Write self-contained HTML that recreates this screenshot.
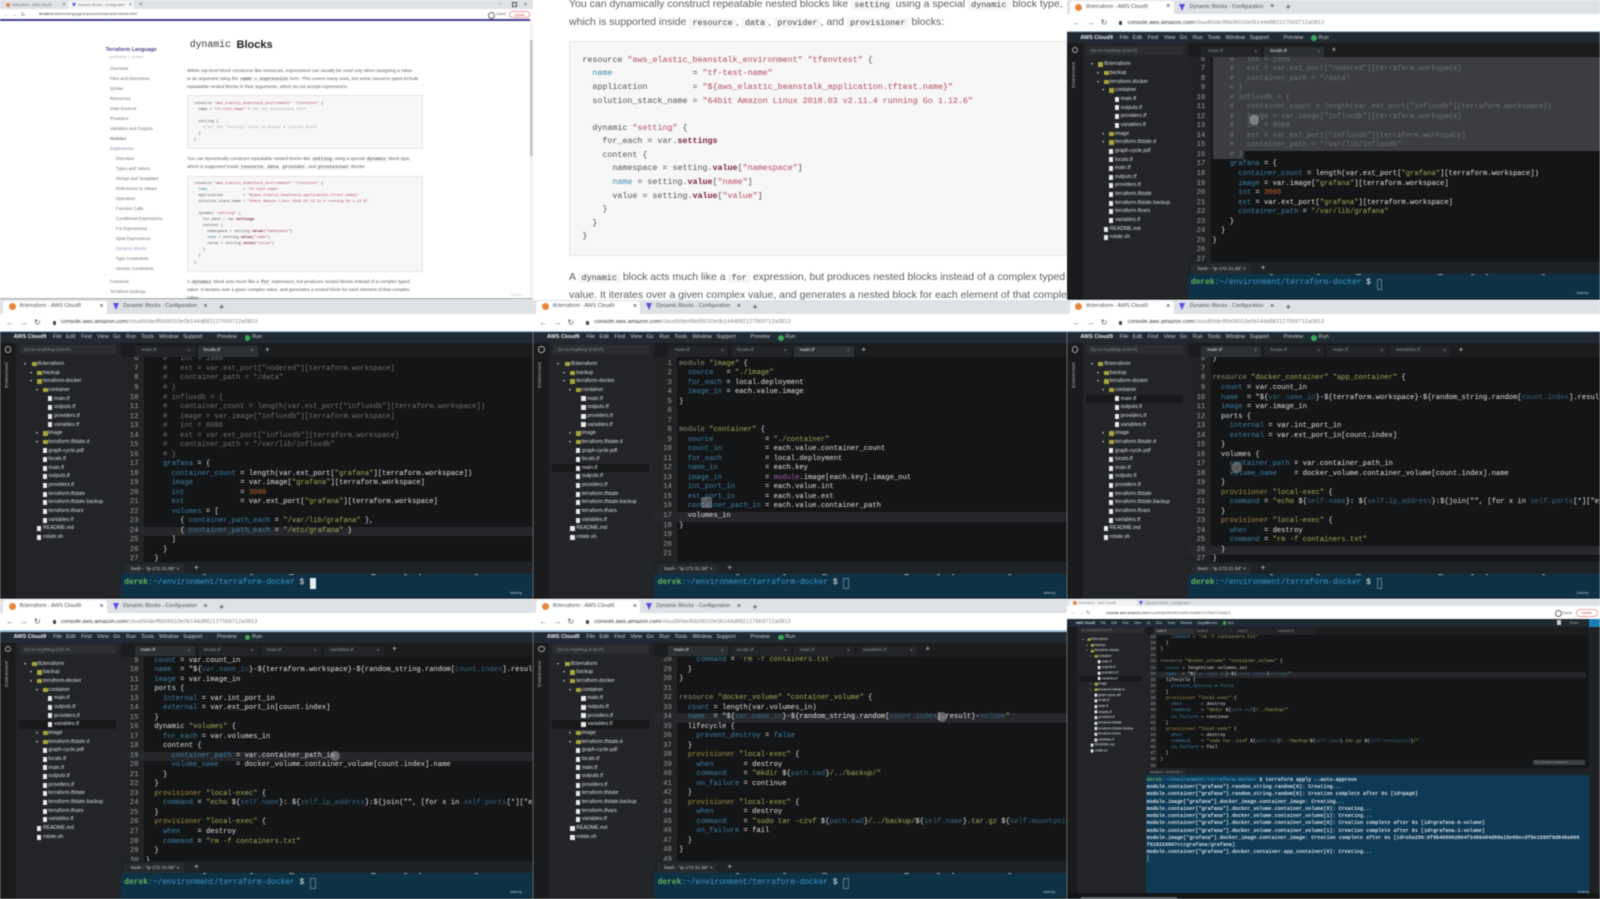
<!DOCTYPE html>
<html lang="en"><head><meta charset="utf-8"><title>Dynamic Blocks</title>
<style>
html,body{margin:0;padding:0;background:#fff;width:1600px;height:899px;overflow:hidden}
body{position:relative;font-family:"Liberation Sans",sans-serif}
.tile{position:absolute;width:533.4px;height:299.7px;overflow:hidden;background:#1e2022;filter:blur(.42px)}
.a{position:absolute;white-space:nowrap}
.tb{position:absolute;left:0;top:0;width:100%;height:14px;background:#dee1e6}
.at{position:absolute;left:3px;top:1px;width:104px;height:13px;background:#fff;border-radius:3px 3px 0 0}
.ab{position:absolute;left:0;top:14px;width:100%;height:17px;background:#fff}
.bl{position:absolute;left:0;top:31px;width:100%;height:1.3px;background:#a4c8e4}
.fav{position:absolute;left:8.5px;top:3.5px;width:7px;height:7px;border-radius:50%;background:#e8873a}
.fv2{position:absolute;left:112.5px;top:3.5px;width:0;height:0;border-left:3.5px solid transparent;border-right:3.5px solid transparent;border-top:7px solid #5c4ee5}
.tt{position:absolute;top:3.8px;font-size:5.3px;line-height:7px;color:#555;white-space:nowrap}
.tx{position:absolute;top:3.3px;font-size:7px;line-height:8px;color:#333}
.nv{position:absolute;top:18px;font-size:8px;line-height:9px;color:#777}
.url{position:absolute;left:61px;top:19.6px;font-size:5.75px;line-height:7px;color:#888;white-space:nowrap}
.url b{font-weight:normal;color:#333}
.lk{position:absolute;left:52.6px;top:21px;width:3px;height:4px;background:#444;border-radius:1px}
.mn{position:absolute;left:0;top:32.3px;width:100%;height:11px;background:#202a33}
.mi{position:absolute;top:34.8px;font-size:5.5px;line-height:7px;color:#c8ccd0;white-space:nowrap}
.gr{position:absolute;left:244.5px;top:35.2px;width:5.8px;height:5.8px;border-radius:50%;background:#3aa657}
.sb{position:absolute;left:0;top:43.3px;width:16px;height:256.5px;background:#191b1d}
.tr{position:absolute;left:16px;top:43.3px;width:105px;height:256.5px;background:#222427}
.se{position:absolute;left:20px;top:45.5px;width:96px;height:9px;background:#2c2e31;color:#8a8f93;font-size:4.6px;line-height:9px;padding-left:4px;box-sizing:border-box}
.mg{position:absolute;left:5px;top:46.5px;width:4.4px;height:4.4px;border:1px solid #aaa;border-radius:50%}
.ev{position:absolute;left:3px;top:60px;width:8px;height:30px;writing-mode:vertical-rl;transform:rotate(180deg);font-size:4.6px;line-height:8px;color:#b0b0b0;text-align:center}
.tr0{position:absolute;left:121px;top:43.3px;width:413px;height:14px;background:#1a1c1e}
.tbn{position:absolute;top:46.5px;width:60px;height:10.5px;background:#222427;color:#8b9095;font-size:4.9px;line-height:10.5px;padding-left:4px;box-sizing:border-box;white-space:nowrap}
.tbn.on{background:#2d3033;color:#dfe1e3}
.tbn::after{content:"×";position:absolute;right:4px;top:0;color:#888;font-size:5px}
.pl{position:absolute;top:45px;font-size:8px;line-height:10px;color:#ccc}
.ed{position:absolute;left:121px;top:57.3px;width:413px;height:204.7px;background:#141516;overflow:hidden}
.gt{position:absolute;left:0;top:0;width:23px;height:100%;background:#212325}
.hl{position:absolute;left:0;width:100%;height:9.52px;background:#25272a;margin-top:1.2px}
pre{position:absolute;margin:0;font-family:"Liberation Mono",monospace;font-size:7.17px;line-height:9.52px;white-space:pre;color:#e0e0e0}
.ed pre{margin-top:1.2px}
.ed .a{margin-top:1.2px}
.ln{left:0;width:17.5px;text-align:right;color:#9a9c9e}
.cd{left:24.8px}
.k{color:#3a7fa3}.s{color:#a0ad55}.y{color:#a08f3f}.c{color:#6d7072}.n{color:#c9672d}.m{color:#a45fa8}.d{color:#37657f}.o{color:#8f8f70}
.tt2{position:absolute;left:121px;top:262px;width:413px;height:12px;background:#1e2225}
.tl{position:absolute;left:124px;top:264px;width:60px;height:10px;background:#262a2e;color:#c0c4c7;font-size:4.7px;line-height:10px;padding-left:7px;box-sizing:border-box;white-space:nowrap}
.te{position:absolute;left:121px;top:274px;width:413px;height:24.5px;background:#0d3246}
.te::before{content:"";position:absolute;left:0;top:0;width:100%;height:1px;background:
linear-gradient(#999,#999) 82px 0/3px 1px no-repeat,linear-gradient(#999,#999) 129px 0/3px 1px no-repeat,linear-gradient(#999,#999) 168px 0/5px 1px no-repeat,linear-gradient(#999,#999) 250px 0/5px 1px no-repeat,linear-gradient(#999,#999) 283px 0/3px 1px no-repeat,linear-gradient(#999,#999) 298px 0/2px 1px no-repeat,linear-gradient(#999,#999) 354px 0/3px 1px no-repeat}
.pr{position:absolute;left:3.3px;top:4.3px;font-family:"Liberation Mono",monospace;font-size:7.9px;line-height:10px;color:#3c94c6;white-space:pre}
.pr b{color:#63b45c;font-weight:bold}.pr i{font-style:normal;color:#e8e8e8}
.cu{position:absolute;left:189px;top:4.5px;width:3.5px;height:9px;border:.6px solid #5d7c8c}
.cu.on{background:#e6eef2;border-color:#e6eef2}
.ud{position:absolute;left:510px;top:290px;font-size:4px;line-height:6px;color:#b4c0c6}
.tree{position:absolute;left:0;top:60.3px;width:121px}
.tree p{margin:0;height:8.67px;line-height:8.67px;font-size:5.2px;white-space:nowrap;position:relative;color:#dcdfe1}
.tree p.sl{background:linear-gradient(#16181a,#16181a) 19px 0/97px 100% no-repeat}
.tree p::before{content:"";position:absolute;top:1.8px;left:0;width:4.2px;height:5px}
.r0{padding-left:37.5px}.r1{padding-left:43px}.r2{padding-left:48.4px}.r3{padding-left:54px}
.r0::before{left:31.5px!important}.r1::before{left:37px!important}.r2::before{left:42.6px!important}.r3::before{left:48px!important}
.fi::before{background:#e8eaec}
.di::before{background:#a8a63a;width:5px!important;height:4.2px!important;top:2.2px!important}
.di::after{content:"";position:absolute;top:3px;width:0;height:0;border-left:1.4px solid transparent;border-right:1.4px solid transparent;border-top:2.4px solid #ccc}
.r0.di::after{left:24px}.r1.di::after{left:30px}.r2.di::after{left:35.5px}
.w{background:#fff}
.dl{position:absolute;white-space:nowrap;line-height:6px}
.s1{font-size:4.35px;color:#70757a;left:110px}
.s2{font-size:4.35px;color:#70757a;left:115.8px}
.p1{left:187px;font-size:4.65px;line-height:8px;color:#5d6064}
.p1 code{font-family:"Liberation Mono",monospace;color:#444;background:#f3f3f3;padding:0 .8px}
.bx{position:absolute;background:#f7f7f7;border:.5px solid #e4e4e4;box-sizing:border-box}
.c1{font-size:3.72px;line-height:6.07px;color:#555}
.r{color:#b54a60}.b{color:#3f8cb0}.h{color:#7a1f3a;font-weight:bold}.g{color:#aaa}
.p2{left:35.7px;font-size:10.5px;line-height:14px;color:#5c6063;position:absolute;white-space:nowrap}
.p2 code{font-family:"Liberation Mono",monospace;font-size:8.4px;background:#f5f5f5;color:#444;padding:0 3.2px}
.c2{font-size:8.35px;line-height:13.57px;left:49px;top:53.9px;color:#555}
.t9 pre{font-size:4.54px;line-height:6.12px}
.t9 .tm{font-size:5.08px;line-height:7.23px;color:#d6dde0;font-weight:bold}
</style></head><body>

<!-- TILE 1 -->
<div class="tile w" style="left:0;top:0;filter:blur(.5px)">
<div class="a" style="left:0;top:0;width:100%;height:9px;background:#dee1e6"></div>
<div class="a" style="left:68px;top:.5px;width:66px;height:8.5px;background:#f5f6f7;border-radius:2px 2px 0 0"></div>
<div class="a" style="left:5.5px;top:3px;width:4px;height:4px;background:#e8873a;border-radius:50%"></div>
<div class="a" style="left:12px;top:2.5px;font-size:3.4px;line-height:5px;color:#777">tfcterraform - AWS Cloud9</div>
<div class="a" style="left:62.5px;top:2px;font-size:5px;line-height:6px;color:#444">×</div>
<div class="a" style="left:71.5px;top:2.5px;width:0;height:0;border-left:2px solid transparent;border-right:2px solid transparent;border-top:4px solid #5c4ee5"></div>
<div class="a" style="left:78px;top:2.5px;font-size:3.4px;line-height:5px;color:#777">Dynamic Blocks - Configuration</div>
<div class="a" style="left:129px;top:2px;font-size:5px;line-height:6px;color:#444">×</div>
<div class="a" style="left:139px;top:1.5px;font-size:6px;line-height:7px;color:#555">+</div>
<div class="a" style="left:499px;top:1px;font-size:5px;line-height:6px;color:#555">–</div>
<div class="a" style="left:512px;top:2px;width:3px;height:3px;border:.7px solid #555"></div>
<div class="a" style="left:524px;top:1.5px;font-size:5px;line-height:6px;color:#444">×</div>
<div class="a" style="left:0;top:9px;width:100%;height:10px;background:#fff"></div>
<div class="a" style="left:4px;top:11.5px;font-size:5px;line-height:6px;color:#555">←&nbsp;&nbsp;→&nbsp;&nbsp;&nbsp;↻</div>
<div class="a" style="left:39px;top:12px;font-size:3.65px;line-height:5px;color:#555"><span style="color:#222">terraform.io</span>/docs/language/expressions/dynamic-blocks.html</div>
<div class="a" style="left:488px;top:11.5px;width:5px;height:5px;border:.6px solid #666;border-radius:50%"></div>
<div class="a" style="left:496.5px;top:12px;font-size:3.4px;line-height:5px;color:#555">Guest</div>
<div class="a" style="left:509px;top:10.5px;width:21px;height:7px;border:.6px solid #e6a3a0;border-radius:4px;box-sizing:border-box;font-size:3.2px;line-height:6px;text-align:center;color:#c9574f">Update</div>
<div class="a" style="left:0;top:19.3px;width:530px;height:1.6px;background:#43408f"></div>
<div class="a" style="left:530px;top:19px;width:4px;height:281px;background:#f1f1f1"></div>
<div class="a" style="left:530px;top:40px;width:4px;height:116px;background:#c4c4c4"></div>
<div class="a" style="left:0;top:298px;width:100%;height:2px;background:#bdbdbd"></div>

<div class="a" style="left:189.7px;top:37.5px;font-family:'Liberation Mono',monospace;font-size:9.8px;line-height:14px;color:#33363a">dynamic</div>
<div class="a" style="left:236.5px;top:37.5px;font-size:11px;line-height:14px;font-weight:bold;color:#222">Blocks</div>

<div class="dl" style="left:105.6px;top:46.5px;font-size:5.3px;font-weight:bold;color:#4a4a8c">Terraform Language</div>
<div class="dl" style="left:110px;top:53.5px;font-size:3.8px;color:#aaa">(versions)&nbsp;&nbsp;|&nbsp;&nbsp;(more)</div>
<div class="dl s1" style="top:66px">Overview</div>
<div class="dl s1" style="top:76px">Files and Directories</div>
<div class="dl s1" style="top:86px">Syntax</div>
<div class="dl s1" style="top:96px">Resources</div>
<div class="dl s1" style="top:106px">Data Sources</div>
<div class="dl s1" style="top:116px">Providers</div>
<div class="dl s1" style="top:126px">Variables and Outputs</div>
<div class="dl s1" style="top:136px;color:#555">Modules</div>
<div class="dl s1" style="top:146px;color:#8b8bb0">Expressions</div>
<div class="dl s2" style="top:155.7px">Overview</div>
<div class="dl s2" style="top:165.7px">Types and Values</div>
<div class="dl s2" style="top:175.7px">Strings and Templates</div>
<div class="dl s2" style="top:185.7px">References to Values</div>
<div class="dl s2" style="top:195.7px">Operators</div>
<div class="dl s2" style="top:205.7px">Function Calls</div>
<div class="dl s2" style="top:215.7px">Conditional Expressions</div>
<div class="dl s2" style="top:225.7px">For Expressions</div>
<div class="dl s2" style="top:235.7px">Splat Expressions</div>
<div class="dl s2" style="top:245.7px;color:#9a9ab8">Dynamic Blocks</div>
<div class="dl s2" style="top:255.7px">Type Constraints</div>
<div class="dl s2" style="top:265.7px">Version Constraints</div>
<div class="dl s1" style="top:278.7px">Functions</div>
<div class="dl s1" style="top:288.7px">Terraform Settings</div>

<div class="dl p1" style="top:67px">Within top-level block constructs like resources, expressions can usually be used only when assigning a value</div>
<div class="dl p1" style="top:75px">to an argument using the <code>name = expression</code> form. This covers many uses, but some resource types include</div>
<div class="dl p1" style="top:83px">repeatable nested blocks in their arguments, which do not accept expressions:</div>
<div class="bx" style="left:187px;top:95px;width:236px;height:54px"></div>
<pre class="c1" style="left:194px;top:100.7px">resource <span class="r">"aws_elastic_beanstalk_environment" "tfenvtest"</span> {
  name = <span class="r">"tf-test-name"</span> <span class="g"># can use expressions here</span>

  setting {
    <span class="g"># but the "setting" block is always a literal block</span>
  }
}</pre>
<div class="dl p1" style="top:155px">You can dynamically construct repeatable nested blocks like <code>setting</code> using a special <code>dynamic</code> block type,</div>
<div class="dl p1" style="top:163px">which is supported inside <code>resource</code>, <code>data</code>, <code>provider</code>, and <code>provisioner</code> blocks:</div>
<div class="bx" style="left:187px;top:175.7px;width:236px;height:96px"></div>
<pre class="c1" style="left:194px;top:180.7px">resource <span class="r">"aws_elastic_beanstalk_environment" "tfenvtest"</span> {
  <span class="b">name</span>                = <span class="r">"tf-test-name"</span>
  application         = <span class="r">"${aws_elastic_beanstalk_application.tftest.name}"</span>
  solution_stack_name = <span class="r">"64bit Amazon Linux 2018.03 v2.11.4 running Go 1.12.6"</span>

  dynamic <span class="r">"setting"</span> {
    for_each = var.<span class="h">settings</span>
    content {
      namespace = setting.<span class="h">value</span>[<span class="r">"namespace"</span>]
      <span class="b">name</span> = setting.<span class="h">value</span>[<span class="r">"name"</span>]
      value = setting.<span class="h">value</span>[<span class="r">"value"</span>]
    }
  }
}</pre>
<div class="dl p1" style="top:278px">A <code>dynamic</code> block acts much like a <code>for</code> expression, but produces nested blocks instead of a complex typed</div>
<div class="dl p1" style="top:286px">value. It iterates over a given complex value, and generates a nested block for each element of that complex</div>
<div class="dl p1" style="top:294px">value.</div>
<div class="a" style="left:511px;top:292px;font-size:4px;line-height:6px;color:#ccc">ûdemy</div>
</div>

<!-- TILE 2 -->
<div class="tile w" style="left:533.33px;top:0">
<div class="p2" style="top:-3px">You can dynamically construct repeatable nested blocks like <code>setting</code> using a special <code>dynamic</code> block type,</div>
<div class="p2" style="top:15.4px">which is supported inside <code>resource</code>, <code>data</code>, <code>provider</code>, and <code>provisioner</code> blocks:</div>
<div class="bx" style="left:35.7px;top:40.7px;width:520px;height:215.3px"></div>
<pre class="c2">resource <span class="r">"aws_elastic_beanstalk_environment" "tfenvtest"</span> {
  <span class="b">name</span>                = <span class="r">"tf-test-name"</span>
  application         = <span class="r">"${aws_elastic_beanstalk_application.tftest.name}"</span>
  solution_stack_name = <span class="r">"64bit Amazon Linux 2018.03 v2.11.4 running Go 1.12.6"</span>

  dynamic <span class="r">"setting"</span> {
    for_each = var.<span class="h">settings</span>
    content {
      namespace = setting.<span class="h">value</span>[<span class="r">"namespace"</span>]
      <span class="b">name</span> = setting.<span class="h">value</span>[<span class="r">"name"</span>]
      value = setting.<span class="h">value</span>[<span class="r">"value"</span>]
    }
  }
}</pre>
<div class="p2" style="top:270px">A <code>dynamic</code> block acts much like a <code>for</code> expression, but produces nested blocks instead of a complex typed</div>
<div class="p2" style="top:288.4px">value. It iterates over a given complex value, and generates a nested block for each element of that complex</div>
</div>

<!-- TILE 3 -->
<div class="tile" style="left:1066.67px;top:0">
<div class="tb"></div><div class="at"></div><div class="fav"></div><div class="fv2"></div>
<span class="tt" style="left:19.5px">tfcterraform - AWS Cloud9</span><span class="tx" style="left:99.5px">×</span><span class="tt" style="left:123px">Dynamic Blocks - Configuration</span><span class="tx" style="left:203.5px">×</span><span class="tx" style="left:219px;font-size:9px">+</span>
<div class="ab"></div><span class="nv" style="left:6px">←</span><span class="nv" style="left:20px">→</span><span class="nv" style="left:34px;color:#555">↻</span><div class="lk"></div>
<div class="url"><b>console.aws.amazon.com</b>/cloud9/ide/f6b06010e0b144d882127569712a0813</div><div class="bl"></div>
<div class="mn"></div>
<span class="mi" style="left:13.6px;font-weight:bold;color:#e8eaec">AWS Cloud9</span><span class="mi" style="left:53px">File</span><span class="mi" style="left:66px">Edit</span><span class="mi" style="left:81px">Find</span><span class="mi" style="left:97px">View</span><span class="mi" style="left:113px">Go</span><span class="mi" style="left:126px">Run</span><span class="mi" style="left:141px">Tools</span><span class="mi" style="left:159px">Window</span><span class="mi" style="left:183px">Support</span><span class="mi" style="left:217px">Preview</span><div class="gr"></div><span class="mi" style="left:252px">Run</span>
<div class="sb"></div><div class="tr"></div><div class="mg"></div><div class="se">Go to Anything (Ctrl-P)</div><div class="ev">Environment</div>
<div class="tr0"></div><div class="tbn" style="left:134.5px;padding-left:7px">main.tf</div><div class="tbn on" style="left:197.5px;padding-left:6px">locals.tf</div><span class="pl" style="left:265px">+</span>
<div class="tree">
<p class="r0 di">tfcterraform</p><p class="r1 di">backup</p><p class="r1 di">terraform-docker</p><p class="r2 di">container</p><p class="r3 fi">main.tf</p><p class="r3 fi">outputs.tf</p><p class="r3 fi">providers.tf</p><p class="r3 fi">variables.tf</p><p class="r2 di">image</p><p class="r2 di">terraform.tfstate.d</p><p class="r2 fi">graph-cycle.pdf</p><p class="r2 fi">locals.tf</p><p class="r2 fi">main.tf</p><p class="r2 fi">outputs.tf</p><p class="r2 fi">providers.tf</p><p class="r2 fi">terraform.tfstate</p><p class="r2 fi">terraform.tfstate.backup</p><p class="r2 fi">terraform.tfvars</p><p class="r2 fi">variables.tf</p><p class="r1 fi">README.md</p><p class="r1 fi">rotate.sh</p>
</div>
<div class="ed"><div class="gt"></div>
<div class="a" style="left:25.5px;top:-1.2px;width:390px;height:93.4px;background:#3b3d40"></div><div class="a" style="left:25.5px;top:91px;width:31px;height:9.5px;background:#3b3d40"></div>
<pre class="ln" style="top:-2.7px">6
7
8
9
10
11
12
13
14
15
16
17
18
19
20
21
22
23
24
25
26
27</pre>
<pre class="cd" style="top:-2.7px"><span class="c">    #   int = 1880
    #   ext = var.ext_port["nodered"][terraform.workspace]
    #   container_path = "/data"
    # }
    # influxdb = {
    #   container_count = length(var.ext_port["influxdb"][terraform.workspace])
    #   image = var.image["influxdb"][terraform.workspace]
    #   int = 8086
    #   ext = var.ext_port["influxdb"][terraform.workspace]
    #   container_path = "/var/lib/influxdb"
    # }</span>
    <span class="k">grafana</span> = {
      <span class="k">container_count</span> = length(var.ext_port[<span class="s">"grafana"</span>][terraform.workspace])
      <span class="k">image</span> = var.image[<span class="s">"grafana"</span>][terraform.workspace]
      <span class="k">int</span> = <span class="n">3000</span>
      <span class="k">ext</span> = var.ext_port[<span class="s">"grafana"</span>][terraform.workspace]
      <span class="k">container_path</span> = <span class="s">"/var/lib/grafana"</span>
    }
  }
}</pre>
<div class="a" style="left:61px;top:56.5px;width:10px;height:10px;border-radius:50%;background:rgba(180,180,180,.55)"></div>
</div>
<div class="tt2"></div><div class="tl">bash - "ip-172-31-58" ×</div><span class="pl" style="left:194px;top:263px">+</span>
<div class="te"><div class="pr"><b>derek</b>:~/environment/terraform-docker <i>$</i></div><div class="cu"></div></div>
<span class="ud">ûdemy</span>
</div>

<!-- TILE 4 -->
<div class="tile" style="left:0;top:299.67px">
<div class="tb"></div><div class="at"></div><div class="fav"></div><div class="fv2"></div>
<span class="tt" style="left:19.5px">tfcterraform - AWS Cloud9</span><span class="tx" style="left:99.5px">×</span><span class="tt" style="left:123px">Dynamic Blocks - Configuration</span><span class="tx" style="left:203.5px">×</span><span class="tx" style="left:219px;font-size:9px">+</span>
<div class="ab"></div><span class="nv" style="left:6px">←</span><span class="nv" style="left:20px">→</span><span class="nv" style="left:34px;color:#555">↻</span><div class="lk"></div>
<div class="url"><b>console.aws.amazon.com</b>/cloud9/ide/f6b06010e0b144d882127569712a0813</div><div class="bl"></div>
<div class="mn"></div>
<span class="mi" style="left:13.6px;font-weight:bold;color:#e8eaec">AWS Cloud9</span><span class="mi" style="left:53px">File</span><span class="mi" style="left:66px">Edit</span><span class="mi" style="left:81px">Find</span><span class="mi" style="left:97px">View</span><span class="mi" style="left:113px">Go</span><span class="mi" style="left:126px">Run</span><span class="mi" style="left:141px">Tools</span><span class="mi" style="left:159px">Window</span><span class="mi" style="left:183px">Support</span><span class="mi" style="left:217px">Preview</span><div class="gr"></div><span class="mi" style="left:252px">Run</span>
<div class="sb"></div><div class="tr"></div><div class="mg"></div><div class="se">Go to Anything (Ctrl-P)</div><div class="ev">Environment</div>
<div class="tr0"></div><div class="tbn" style="left:134.5px;padding-left:7px">main.tf</div><div class="tbn on" style="left:197.5px;padding-left:6px">locals.tf</div><span class="pl" style="left:265px">+</span>
<div class="tree">
<p class="r0 di">tfcterraform</p><p class="r1 di">backup</p><p class="r1 di">terraform-docker</p><p class="r2 di">container</p><p class="r3 fi">main.tf</p><p class="r3 fi">outputs.tf</p><p class="r3 fi">providers.tf</p><p class="r3 fi">variables.tf</p><p class="r2 di">image</p><p class="r2 di">terraform.tfstate.d</p><p class="r2 fi">graph-cycle.pdf</p><p class="r2 fi">locals.tf</p><p class="r2 fi">main.tf</p><p class="r2 fi">outputs.tf</p><p class="r2 fi">providers.tf</p><p class="r2 fi">terraform.tfstate</p><p class="r2 fi">terraform.tfstate.backup</p><p class="r2 fi">terraform.tfvars</p><p class="r2 fi">variables.tf</p><p class="r1 fi">README.md</p><p class="r1 fi">rotate.sh</p>
</div>
<div class="ed"><div class="gt"></div><div class="hl" style="top:168.6px"></div>
<pre class="ln" style="top:-2.7px">6
7
8
9
10
11
12
13
14
15
16
17
18
19
20
21
22
23
24
25
26
27</pre>
<pre class="cd" style="top:-2.7px"><span class="c">    #   int = 1880
    #   ext = var.ext_port["nodered"][terraform.workspace]
    #   container_path = "/data"
    # }
    # influxdb = {
    #   container_count = length(var.ext_port["influxdb"][terraform.workspace])
    #   image = var.image["influxdb"][terraform.workspace]
    #   int = 8086
    #   ext = var.ext_port["influxdb"][terraform.workspace]
    #   container_path = "/var/lib/influxdb"
    # }</span>
    <span class="k">grafana</span> = {
      <span class="k">container_count</span> = length(var.ext_port[<span class="s">"grafana"</span>][terraform.workspace])
      <span class="k">image</span>           = var.image[<span class="s">"grafana"</span>][terraform.workspace]
      <span class="k">int</span>             = <span class="n">3000</span>
      <span class="k">ext</span>             = var.ext_port[<span class="s">"grafana"</span>][terraform.workspace]
      <span class="k">volumes</span> = [
        { <span class="k">container_path_each</span> = <span class="s">"/var/lib/grafana"</span> },
        { <span class="k">container_path_each</span> = <span class="s">"/etc/grafana"</span> }
      ]
    }
  }</pre>
</div>
<div class="tt2"></div><div class="tl">bash - "ip-172-31-58" ×</div><span class="pl" style="left:194px;top:263px">+</span>
<div class="te"><div class="pr"><b>derek</b>:~/environment/terraform-docker <i>$</i></div><div class="cu on"></div></div>
<span class="ud">ûdemy</span>
</div>

<!-- TILE 5 -->
<div class="tile" style="left:533.33px;top:299.67px">
<div class="tb"></div><div class="at"></div><div class="fav"></div><div class="fv2"></div>
<span class="tt" style="left:19.5px">tfcterraform - AWS Cloud9</span><span class="tx" style="left:99.5px">×</span><span class="tt" style="left:123px">Dynamic Blocks - Configuration</span><span class="tx" style="left:203.5px">×</span><span class="tx" style="left:219px;font-size:9px">+</span>
<div class="ab"></div><span class="nv" style="left:6px">←</span><span class="nv" style="left:20px">→</span><span class="nv" style="left:34px;color:#555">↻</span><div class="lk"></div>
<div class="url"><b>console.aws.amazon.com</b>/cloud9/ide/f6b06010e0b144d882127569712a0813</div><div class="bl"></div>
<div class="mn"></div>
<span class="mi" style="left:13.6px;font-weight:bold;color:#e8eaec">AWS Cloud9</span><span class="mi" style="left:53px">File</span><span class="mi" style="left:66px">Edit</span><span class="mi" style="left:81px">Find</span><span class="mi" style="left:97px">View</span><span class="mi" style="left:113px">Go</span><span class="mi" style="left:126px">Run</span><span class="mi" style="left:141px">Tools</span><span class="mi" style="left:159px">Window</span><span class="mi" style="left:183px">Support</span><span class="mi" style="left:217px">Preview</span><div class="gr"></div><span class="mi" style="left:252px">Run</span>
<div class="sb"></div><div class="tr"></div><div class="mg"></div><div class="se">Go to Anything (Ctrl-P)</div><div class="ev">Environment</div>
<div class="tr0"></div><div class="tbn" style="left:134.5px;padding-left:7px">main.tf</div><div class="tbn" style="left:197.5px;padding-left:6px">locals.tf</div><div class="tbn on" style="left:260.5px;padding-left:6px">main.tf</div><span class="pl" style="left:328px">+</span>
<div class="tree">
<p class="r0 di">tfcterraform</p><p class="r1 di">backup</p><p class="r1 di">terraform-docker</p><p class="r2 di">container</p><p class="r3 fi">main.tf</p><p class="r3 fi">outputs.tf</p><p class="r3 fi">providers.tf</p><p class="r3 fi">variables.tf</p><p class="r2 di">image</p><p class="r2 di">terraform.tfstate.d</p><p class="r2 fi">graph-cycle.pdf</p><p class="r2 fi">locals.tf</p><p class="r2 fi sl">main.tf</p><p class="r2 fi">outputs.tf</p><p class="r2 fi">providers.tf</p><p class="r2 fi">terraform.tfstate</p><p class="r2 fi">terraform.tfstate.backup</p><p class="r2 fi">terraform.tfvars</p><p class="r2 fi">variables.tf</p><p class="r1 fi">README.md</p><p class="r1 fi">rotate.sh</p>
</div>
<div class="ed"><div class="gt"></div><div class="hl" style="top:153.9px"></div>
<pre class="ln" style="top:1.6px">1
2
3
4
5
6
7
8
9
10
11
12
13
14
15
16
17
18
19
20
21</pre>
<pre class="cd" style="top:1.6px"><span class="o">module</span> <span class="s">"image"</span> {
  <span class="k">source</span>   = <span class="s">"./image"</span>
  <span class="k">for_each</span> = local.deployment
  <span class="k">image_in</span> = each.value.image
}


<span class="o">module</span> <span class="s">"container"</span> {
  <span class="k">source</span>            = <span class="s">"./container"</span>
  <span class="k">count_in</span>          = each.value.container_count
  <span class="k">for_each</span>          = local.deployment
  <span class="k">name_in</span>           = each.key
  <span class="k">image_in</span>          = <span class="m">module</span>.image[each.key].image_out
  <span class="k">int_port_in</span>       = each.value.int
  <span class="k">ext_port_in</span>       = each.value.ext
  <span class="k">container_path_in</span> = each.value.container_path
  volumes_in
}</pre>
<div class="a" style="left:47px;top:138.5px;width:11px;height:11px;border-radius:2px;background:rgba(170,170,170,.45)"></div>
</div>
<div class="tt2"></div><div class="tl">bash - "ip-172-31-58" ×</div><span class="pl" style="left:194px;top:263px">+</span>
<div class="te"><div class="pr"><b>derek</b>:~/environment/terraform-docker <i>$</i></div><div class="cu"></div></div>
<span class="ud">ûdemy</span>
</div>

<!-- TILE 6 -->
<div class="tile" style="left:1066.67px;top:299.67px">
<div class="tb"></div><div class="at"></div><div class="fav"></div><div class="fv2"></div>
<span class="tt" style="left:19.5px">tfcterraform - AWS Cloud9</span><span class="tx" style="left:99.5px">×</span><span class="tt" style="left:123px">Dynamic Blocks - Configuration</span><span class="tx" style="left:203.5px">×</span><span class="tx" style="left:219px;font-size:9px">+</span>
<div class="ab"></div><span class="nv" style="left:6px">←</span><span class="nv" style="left:20px">→</span><span class="nv" style="left:34px;color:#555">↻</span><div class="lk"></div>
<div class="url"><b>console.aws.amazon.com</b>/cloud9/ide/f6b06010e0b144d882127569712a0813</div><div class="bl"></div>
<div class="mn"></div>
<span class="mi" style="left:13.6px;font-weight:bold;color:#e8eaec">AWS Cloud9</span><span class="mi" style="left:53px">File</span><span class="mi" style="left:66px">Edit</span><span class="mi" style="left:81px">Find</span><span class="mi" style="left:97px">View</span><span class="mi" style="left:113px">Go</span><span class="mi" style="left:126px">Run</span><span class="mi" style="left:141px">Tools</span><span class="mi" style="left:159px">Window</span><span class="mi" style="left:183px">Support</span><span class="mi" style="left:217px">Preview</span><div class="gr"></div><span class="mi" style="left:252px">Run</span>
<div class="sb"></div><div class="tr"></div><div class="mg"></div><div class="se">Go to Anything (Ctrl-P)</div><div class="ev">Environment</div>
<div class="tr0"></div><div class="tbn on" style="left:134.5px;padding-left:6px">main.tf</div><div class="tbn" style="left:197.5px;padding-left:6px">locals.tf</div><div class="tbn" style="left:260.5px;padding-left:6px">main.tf</div><div class="tbn" style="left:323.5px;padding-left:6px">variables.tf</div><span class="pl" style="left:392px">+</span>
<div class="tree">
<p class="r0 di">tfcterraform</p><p class="r1 di">backup</p><p class="r1 di">terraform-docker</p><p class="r2 di">container</p><p class="r3 fi sl">main.tf</p><p class="r3 fi">outputs.tf</p><p class="r3 fi">providers.tf</p><p class="r3 fi">variables.tf</p><p class="r2 di">image</p><p class="r2 di">terraform.tfstate.d</p><p class="r2 fi">graph-cycle.pdf</p><p class="r2 fi">locals.tf</p><p class="r2 fi">main.tf</p><p class="r2 fi">outputs.tf</p><p class="r2 fi">providers.tf</p><p class="r2 fi">terraform.tfstate</p><p class="r2 fi">terraform.tfstate.backup</p><p class="r2 fi">terraform.tfvars</p><p class="r2 fi">variables.tf</p><p class="r1 fi">README.md</p><p class="r1 fi">rotate.sh</p>
</div>
<div class="ed"><div class="gt"></div><div class="hl" style="top:187.5px"></div>
<pre class="ln" style="top:-2.7px">6
7
8
9
10
11
12
13
14
15
16
17
18
19
20
21
22
23
24
25
26
27</pre>
<pre class="cd" style="top:-2.7px">}

<span class="o">resource</span> <span class="s">"docker_container" "app_container"</span> {
  <span class="k">count</span> = var.count_in
  <span class="k">name</span>  = "${<span class="d">var.name_in</span>}-${terraform.workspace}-${random_string.random[<span class="d">count.index</span>].result}"
  <span class="k">image</span> = var.image_in
  ports {
    <span class="k">internal</span> = var.int_port_in
    <span class="k">external</span> = var.ext_port_in[count.index]
  }
  volumes {
    <span class="k">container_path</span> = var.container_path_in
    <span class="k">volume_name</span>    = docker_volume.container_volume[count.index].name
  }
  <span class="y">provisioner</span> <span class="s">"local-exec"</span> {
    <span class="k">command</span> = <span class="s">"echo</span> ${<span class="d">self.name</span>}: ${<span class="d">self.ip_address</span>}:${join("", [for x in <span class="d">self.ports</span>[*]["external"]: x])}"
  }
  <span class="y">provisioner</span> <span class="s">"local-exec"</span> {
    <span class="k">when</span>    = destroy
    <span class="k">command</span> = <span class="s">"rm -f containers.txt"</span>
  }
}</pre>
<div class="a" style="left:43px;top:103.5px;width:11px;height:11px;border-radius:50%;background:rgba(170,170,170,.45)"></div>
</div>
<div class="tt2"></div><div class="tl">bash - "ip-172-31-58" ×</div><span class="pl" style="left:194px;top:263px">+</span>
<div class="te"><div class="pr"><b>derek</b>:~/environment/terraform-docker <i>$</i></div><div class="cu"></div></div>
<span class="ud">ûdemy</span>
</div>

<!-- TILE 7 -->
<div class="tile" style="left:0;top:599.33px">
<div class="tb"></div><div class="at"></div><div class="fav"></div><div class="fv2"></div>
<span class="tt" style="left:19.5px">tfcterraform - AWS Cloud9</span><span class="tx" style="left:99.5px">×</span><span class="tt" style="left:123px">Dynamic Blocks - Configuration</span><span class="tx" style="left:203.5px">×</span><span class="tx" style="left:219px;font-size:9px">+</span>
<div class="ab"></div><span class="nv" style="left:6px">←</span><span class="nv" style="left:20px">→</span><span class="nv" style="left:34px;color:#555">↻</span><div class="lk"></div>
<div class="url"><b>console.aws.amazon.com</b>/cloud9/ide/f6b06010e0b144d882127569712a0813</div><div class="bl"></div>
<div class="mn"></div>
<span class="mi" style="left:13.6px;font-weight:bold;color:#e8eaec">AWS Cloud9</span><span class="mi" style="left:53px">File</span><span class="mi" style="left:66px">Edit</span><span class="mi" style="left:81px">Find</span><span class="mi" style="left:97px">View</span><span class="mi" style="left:113px">Go</span><span class="mi" style="left:126px">Run</span><span class="mi" style="left:141px">Tools</span><span class="mi" style="left:159px">Window</span><span class="mi" style="left:183px">Support</span><span class="mi" style="left:217px">Preview</span><div class="gr"></div><span class="mi" style="left:252px">Run</span>
<div class="sb"></div><div class="tr"></div><div class="mg"></div><div class="se">Go to Anything (Ctrl-P)</div><div class="ev">Environment</div>
<div class="tr0"></div><div class="tbn on" style="left:134.5px;padding-left:6px">main.tf</div><div class="tbn" style="left:197.5px;padding-left:6px">locals.tf</div><div class="tbn" style="left:260.5px;padding-left:6px">main.tf</div><div class="tbn" style="left:323.5px;padding-left:6px">variables.tf</div><span class="pl" style="left:392px">+</span>
<div class="tree">
<p class="r0 di">tfcterraform</p><p class="r1 di">backup</p><p class="r1 di">terraform-docker</p><p class="r2 di">container</p><p class="r3 fi">main.tf</p><p class="r3 fi">outputs.tf</p><p class="r3 fi">providers.tf</p><p class="r3 fi sl">variables.tf</p><p class="r2 di">image</p><p class="r2 di">terraform.tfstate.d</p><p class="r2 fi">graph-cycle.pdf</p><p class="r2 fi">locals.tf</p><p class="r2 fi">main.tf</p><p class="r2 fi">outputs.tf</p><p class="r2 fi">providers.tf</p><p class="r2 fi">terraform.tfstate</p><p class="r2 fi">terraform.tfstate.backup</p><p class="r2 fi">terraform.tfvars</p><p class="r2 fi">variables.tf</p><p class="r1 fi">README.md</p><p class="r1 fi">rotate.sh</p>
</div>
<div class="ed"><div class="gt"></div><div class="hl" style="top:94.1px"></div>
<pre class="ln" style="top:-1.1px">9
10
11
12
13
14
15
16
17
18
19
20
21
22
23
24
25
26
27
28
29
30</pre>
<pre class="cd" style="top:-1.1px">  <span class="k">count</span> = var.count_in
  <span class="k">name</span>  = "${<span class="d">var.name_in</span>}-${terraform.workspace}-${random_string.random[<span class="d">count.index</span>].result}"
  <span class="k">image</span> = var.image_in
  ports {
    <span class="k">internal</span> = var.int_port_in
    <span class="k">external</span> = var.ext_port_in[count.index]
  }
  dynamic <span class="s">"volumes"</span> {
    <span class="k">for_each</span> = var.volumes_in
    content {
      <span class="k">container_path</span> = var.container_path_in
      <span class="k">volume_name</span>    = docker_volume.container_volume[count.index].name
    }
  }
  <span class="y">provisioner</span> <span class="s">"local-exec"</span> {
    <span class="k">command</span> = <span class="s">"echo</span> ${<span class="d">self.name</span>}: ${<span class="d">self.ip_address</span>}:${join("", [for x in <span class="d">self.ports</span>[*]["external"]: x])}"
  }
  <span class="y">provisioner</span> <span class="s">"local-exec"</span> {
    <span class="k">when</span>    = destroy
    <span class="k">command</span> = <span class="s">"rm -f containers.txt"</span>
  }
}</pre>
<div class="a" style="left:209px;top:93.5px;width:10px;height:10px;border-radius:50%;background:rgba(170,170,170,.5)"></div>
</div>
<div class="tt2"></div><div class="tl">bash - "ip-172-31-58" ×</div><span class="pl" style="left:194px;top:263px">+</span>
<div class="te"><div class="pr"><b>derek</b>:~/environment/terraform-docker <i>$</i></div><div class="cu"></div></div>
<span class="ud">ûdemy</span>
</div>

<!-- TILE 8 -->
<div class="tile" style="left:533.33px;top:599.33px">
<div class="tb"></div><div class="at"></div><div class="fav"></div><div class="fv2"></div>
<span class="tt" style="left:19.5px">tfcterraform - AWS Cloud9</span><span class="tx" style="left:99.5px">×</span><span class="tt" style="left:123px">Dynamic Blocks - Configuration</span><span class="tx" style="left:203.5px">×</span><span class="tx" style="left:219px;font-size:9px">+</span>
<div class="ab"></div><span class="nv" style="left:6px">←</span><span class="nv" style="left:20px">→</span><span class="nv" style="left:34px;color:#555">↻</span><div class="lk"></div>
<div class="url"><b>console.aws.amazon.com</b>/cloud9/ide/f6b06010e0b144d882127569712a0813</div><div class="bl"></div>
<div class="mn"></div>
<span class="mi" style="left:13.6px;font-weight:bold;color:#e8eaec">AWS Cloud9</span><span class="mi" style="left:53px">File</span><span class="mi" style="left:66px">Edit</span><span class="mi" style="left:81px">Find</span><span class="mi" style="left:97px">View</span><span class="mi" style="left:113px">Go</span><span class="mi" style="left:126px">Run</span><span class="mi" style="left:141px">Tools</span><span class="mi" style="left:159px">Window</span><span class="mi" style="left:183px">Support</span><span class="mi" style="left:217px">Preview</span><div class="gr"></div><span class="mi" style="left:252px">Run</span>
<div class="sb"></div><div class="tr"></div><div class="mg"></div><div class="se">Go to Anything (Ctrl-P)</div><div class="ev">Environment</div>
<div class="tr0"></div><div class="tbn on" style="left:134.5px;padding-left:6px">main.tf</div><div class="tbn" style="left:197.5px;padding-left:6px">locals.tf</div><div class="tbn" style="left:260.5px;padding-left:6px">main.tf</div><div class="tbn" style="left:323.5px;padding-left:6px">variables.tf</div><span class="pl" style="left:392px">+</span>
<div class="tree">
<p class="r0 di">tfcterraform</p><p class="r1 di">backup</p><p class="r1 di">terraform-docker</p><p class="r2 di">container</p><p class="r3 fi">main.tf</p><p class="r3 fi">outputs.tf</p><p class="r3 fi">providers.tf</p><p class="r3 fi sl">variables.tf</p><p class="r2 di">image</p><p class="r2 di">terraform.tfstate.d</p><p class="r2 fi">graph-cycle.pdf</p><p class="r2 fi">locals.tf</p><p class="r2 fi">main.tf</p><p class="r2 fi">outputs.tf</p><p class="r2 fi">providers.tf</p><p class="r2 fi">terraform.tfstate</p><p class="r2 fi">terraform.tfstate.backup</p><p class="r2 fi">terraform.tfvars</p><p class="r2 fi">variables.tf</p><p class="r1 fi">README.md</p><p class="r1 fi">rotate.sh</p>
</div>
<div class="ed"><div class="gt"></div><div class="hl" style="top:55.3px"></div>
<pre class="ln" style="top:-1.8px">28
29
30
31
32
33
34
35
36
37
38
39
40
41
42
43
44
45
46
47
48
49</pre>
<pre class="cd" style="top:-1.8px">    <span class="k">command</span> = <span class="s">"rm -f containers.txt"</span>
  }
}

<span class="o">resource</span> <span class="s">"docker_volume" "container_volume"</span> {
  <span class="k">count</span> = length(var.volumes_in)
  <span class="k">name</span>  = "${<span class="d">var.name_in</span>}-${random_string.random[<span class="d">count.index</span>].result}-<span class="d">volume</span><span class="s">"</span>
  lifecycle {
    <span class="k">prevent_destroy</span> = <span class="k">false</span>
  }
  <span class="y">provisioner</span> <span class="s">"local-exec"</span> {
    <span class="k">when</span>       = destroy
    <span class="k">command</span>    = <span class="s">"mkdir</span> ${<span class="d">path.cwd</span>}<span class="s">/../backup/"</span>
    <span class="k">on_failure</span> = continue
  }
  <span class="y">provisioner</span> <span class="s">"local-exec"</span> {
    <span class="k">when</span>       = destroy
    <span class="k">command</span>    = <span class="s">"sudo tar -czvf</span> ${<span class="d">path.cwd</span>}<span class="s">/../backup/</span>${<span class="d">self.name</span>}<span class="s">.tar.gz</span> ${<span class="d">self.mountpoint</span>}<span class="s">/"</span>
    <span class="k">on_failure</span> = fail
  }
}</pre>
<div class="a" style="left:283px;top:54.5px;width:10px;height:10px;border-radius:50%;background:rgba(170,170,170,.5)"></div>
</div>
<div class="tt2"></div><div class="tl">bash - "ip-172-31-58" ×</div><span class="pl" style="left:194px;top:263px">+</span>
<div class="te"><div class="pr"><b>derek</b>:~/environment/terraform-docker <i>$</i></div><div class="cu"></div></div>
<span class="ud">ûdemy</span>
</div>

<!-- TILE 9 -->
<div class="tile t9" style="left:1066.67px;top:599.33px;filter:blur(.5px)">
<div class="a" style="left:0;top:0;width:100%;height:7px;background:#dee1e6"></div>
<div class="a" style="left:2px;top:.5px;width:68px;height:6.5px;background:#f3f4f5;border-radius:2px 2px 0 0"></div>
<div class="a" style="left:6px;top:2px;width:4px;height:4px;border-radius:50%;background:#e8873a"></div>
<div class="a" style="left:12px;top:1.5px;font-size:3.2px;line-height:5px;color:#888">tfcterraform - AWS Cloud9</div>
<div class="a" style="left:72.5px;top:2px;width:0;height:0;border-left:2px solid transparent;border-right:2px solid transparent;border-top:4px solid #5c4ee5"></div>
<div class="a" style="left:79px;top:1.5px;font-size:3.2px;line-height:5px;color:#888">Dynamic Blocks - Configuration</div>
<div class="a" style="left:0;top:7px;width:100%;height:12.3px;background:#fff"></div>
<div class="a" style="left:4px;top:11px;font-size:5px;line-height:6px;color:#666">←&nbsp;&nbsp;→&nbsp;&nbsp;↻</div>
<div class="a" style="left:39.5px;top:11.5px;font-size:3.65px;line-height:5px;color:#666"><span style="color:#222">console.aws.amazon.com</span>/cloud9/ide/f6b06010e0b144d882127569712a0813</div>
<div class="a" style="left:488px;top:11px;width:5px;height:5px;border:.6px solid #666;border-radius:50%"></div>
<div class="a" style="left:496px;top:11.5px;font-size:3.4px;line-height:5px;color:#555">Guest</div>
<div class="a" style="left:509px;top:10px;width:22px;height:7.5px;border:.6px solid #e6a3a0;border-radius:4px;box-sizing:border-box;font-size:3.2px;line-height:6.5px;text-align:center;color:#c9574f">Update</div>
<div class="a" style="left:0;top:19.4px;width:100%;height:8px;background:#202a33"></div>
<div class="a" style="left:9px;top:21.5px;font-size:3.3px;line-height:5px;color:#d2d5d8;word-spacing:4.4px"><b style="word-spacing:0">AWS Cloud9</b> File Edit Find View Go Run Tools Window Support</div>
<div class="a" style="left:139px;top:21.5px;font-size:3.3px;line-height:5px;color:#c4c8cc">Preview</div>
<div class="a" style="left:156px;top:22px;width:3.6px;height:3.6px;border-radius:50%;background:#3aa657"></div>
<div class="a" style="left:161px;top:21.5px;font-size:3.3px;line-height:5px;color:#c4c8cc">Run</div>
<div class="a" style="left:490px;top:21px;width:4px;height:5px;background:#ccc"></div>
<div class="a" style="left:503px;top:21.5px;font-size:3.3px;line-height:5px;color:#aaa">Share</div>
<div class="a" style="left:522px;top:19.4px;width:12px;height:8px;background:#1b7fb5"></div>
<div class="a" style="left:0;top:27.4px;width:10px;height:272px;background:#191b1d"></div>
<div class="a" style="left:10px;top:27.4px;width:69px;height:272px;background:#222427"></div>
<div class="a" style="left:13px;top:28.5px;width:64px;height:5.5px;background:#2c2e31;color:#888;font-size:3px;line-height:5.5px;padding-left:2px;box-sizing:border-box">Go to Anything (Ctrl-P)</div>
<div class="a" style="left:79px;top:27.4px;width:455px;height:8px;background:#1a1c1e"></div>
<div class="a" style="left:87px;top:29px;width:40px;height:6.5px;background:#2d3033;color:#ccc;font-size:3.2px;line-height:6.5px;padding-left:3px;box-sizing:border-box">main.tf</div>
<div class="a" style="left:127.5px;top:29px;width:40px;height:6.5px;background:#222427;color:#888;font-size:3.2px;line-height:6.5px;padding-left:3px;box-sizing:border-box">locals.tf</div>
<div class="a" style="left:168px;top:29px;width:40px;height:6.5px;background:#222427;color:#888;font-size:3.2px;line-height:6.5px;padding-left:3px;box-sizing:border-box">main.tf</div>
<div class="a" style="left:208.5px;top:29px;width:40px;height:6.5px;background:#222427;color:#888;font-size:3.2px;line-height:6.5px;padding-left:3px;box-sizing:border-box">variables.tf</div>
<div class="tree" style="top:37.9px;left:0;transform:scale(.642);transform-origin:0 0">
<p class="r0 di">tfcterraform</p><p class="r1 di">backup</p><p class="r1 di">terraform-docker</p><p class="r2 di">container</p><p class="r3 fi">main.tf</p><p class="r3 fi">outputs.tf</p><p class="r3 fi">providers.tf</p><p class="r3 fi sl">variables.tf</p><p class="r2 di">image</p><p class="r2 di">terraform.tfstate.d</p><p class="r2 fi">graph-cycle.pdf</p><p class="r2 fi">locals.tf</p><p class="r2 fi">main.tf</p><p class="r2 fi">outputs.tf</p><p class="r2 fi">providers.tf</p><p class="r2 fi">terraform.tfstate</p><p class="r2 fi">terraform.tfstate.backup</p><p class="r2 fi">terraform.tfvars</p><p class="r2 fi">variables.tf</p><p class="r1 fi">README.md</p><p class="r1 fi">rotate.sh</p>
</div>
<div class="a" style="left:79px;top:35.4px;width:443px;height:133px;background:#141516;overflow:hidden">
<div class="a" style="left:0;top:0;width:11px;height:100%;background:#212325"></div>
<div class="a" style="left:0;top:37.4px;width:440px;height:6.1px;background:#25272a"></div>
<pre style="left:0;width:10px;text-align:right;top:.2px;color:#9a9c9e">28
29
30
31
32
33
34
35
36
37
38
39
40
41
42
43
44
45
46
47
48
49</pre>
<pre style="left:14.7px;top:.2px"><span class="k">    command</span> = <span class="s">"rm -f containers.txt"</span>
  }
}

<span class="o">resource</span> <span class="s">"docker_volume" "container_volume"</span> {
  <span class="k">count</span> = length(var.volumes_in)
  <span class="k">name</span>  = "${<span class="d">var.name_in</span>}-${<span class="d">count.index</span>}-<span class="d">volume</span><span class="s">"</span>
  lifecycle {
    <span class="k">prevent_destroy</span> = <span class="k">false</span>
  }
  <span class="y">provisioner</span> <span class="s">"local-exec"</span> {
    <span class="k">when</span>       = destroy
    <span class="k">command</span>    = <span class="s">"mkdir</span> ${<span class="d">path.cwd</span>}<span class="s">/../backup/"</span>
    <span class="k">on_failure</span> = continue
  }
  <span class="y">provisioner</span> <span class="s">"local-exec"</span> {
    <span class="k">when</span>       = destroy
    <span class="k">command</span>    = <span class="s">"sudo tar -czvf</span> ${<span class="d">path.cwd</span>}<span class="s">/../backup/</span>${<span class="d">self.name</span>}<span class="s">.tar.gz</span> ${<span class="d">self.mountpoint</span>}<span class="s">/"</span>
    <span class="k">on_failure</span> = fail
  }
}</pre>
</div>
<div class="a" style="left:466px;top:161px;width:52px;height:5px;background:#3a3f44;color:#999;font-size:3px;line-height:5px;padding-left:2px;box-sizing:border-box">47:1 Terraform Spaces: 2</div>
<div class="a" style="left:522px;top:27.4px;width:12px;height:272px;background:#1f2224"></div>
<div class="a" style="left:79px;top:168.4px;width:443px;height:7px;background:#1e2225"></div>
<div class="a" style="left:82px;top:169.4px;width:36px;height:6px;background:#262a2e;color:#aaa;font-size:3px;line-height:6px;padding-left:2px;box-sizing:border-box">terraform - "ip-172-31" ×</div>
<div class="a" style="left:79px;top:175.4px;width:443px;height:118px;background:#0e3a55"></div>
<pre class="tm" style="left:80px;top:177.7px"><span style="color:#5fae59">derek</span><span style="color:#3c8cc0">:~/environment/terraform-docker</span> $ terraform apply --auto-approve
module.container["grafana"].random_string.random[0]: Creating...
module.container["grafana"].random_string.random[0]: Creation complete after 0s [id=pag6]
module.image["grafana"].docker_image.container_image: Creating...
module.container["grafana"].docker_volume.container_volume[0]: Creating...
module.container["grafana"].docker_volume.container_volume[1]: Creating...
module.container["grafana"].docker_volume.container_volume[0]: Creation complete after 0s [id=grafana-0-volume]
module.container["grafana"].docker_volume.container_volume[1]: Creation complete after 0s [id=grafana-1-volume]
module.image["grafana"].docker_image.container_image: Creation complete after 6s [id=sha256:0f9b469692804f3496494d99a15e65ecdf8e1509f8d648a006
f0192200d7ctcgrafana/grafana]
module.container["grafana"].docker_container.app_container[0]: Creating...</pre>
<div class="a" style="left:80.5px;top:256px;width:2px;height:7px;background:#3e6a82"></div>
<div class="a" style="left:0;top:293.4px;width:100%;height:7px;background:#141516"></div>
<div class="a" style="left:14px;top:297.5px;width:96px;height:2px;background:#5a5f64"></div>
<div class="a" style="left:511px;top:290px;font-size:4px;line-height:6px;color:#b4c0c6">ûdemy</div>
</div>

</body></html>
